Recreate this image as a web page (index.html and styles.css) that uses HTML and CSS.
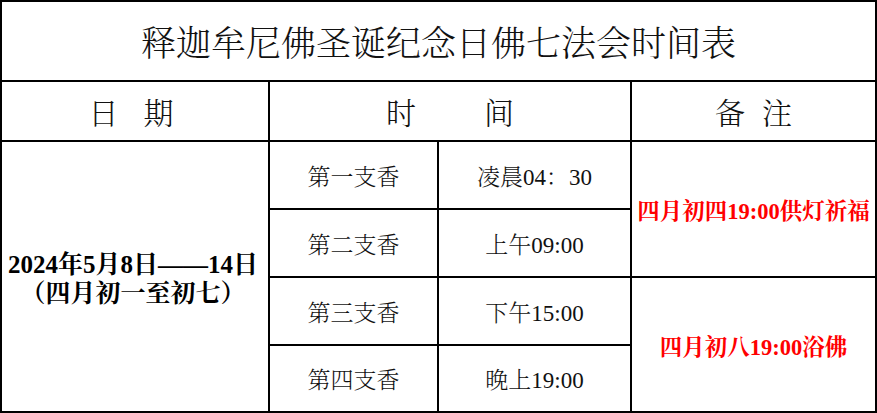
FILE: index.html
```html
<!DOCTYPE html>
<html lang="zh-CN">
<head>
<meta charset="utf-8">
<link rel="stylesheet" href="styles.css">
<title>释迦牟尼佛圣诞纪念日佛七法会时间表</title>
</head>
<body>
<div class="sheet">
  <div class="cell title">释迦牟尼佛圣诞纪念日佛七法会时间表</div>

  <div class="cell head head-date"><span>日</span><span class="gap-date">期</span></div>
  <div class="cell head head-time"><span>时</span><span class="gap-time">间</span></div>
  <div class="cell head head-note"><span>备</span><span class="gap-note">注</span></div>

  <div class="cell date">2024年5月8日——14日<br>（四月初一至初七）</div>

  <div class="cell body r1 c2">第一支香</div>
  <div class="cell body r1 c3">凌晨04：30</div>
  <div class="cell note n1">四月初四19:00供灯祈福</div>

  <div class="cell body r2 c2">第二支香</div>
  <div class="cell body r2 c3">上午09:00</div>

  <div class="cell body r3 c2">第三支香</div>
  <div class="cell body r3 c3">下午15:00</div>
  <div class="cell note n2">四月初八19:00浴佛</div>

  <div class="cell body r4 c2">第四支香</div>
  <div class="cell body r4 c3">晚上19:00</div>
</div>
</body>
</html>
```

FILE: styles.css
```css
html, body {
  margin: 0;
  padding: 0;
  background: #fff;
}

.sheet {
  width: 877px;
  height: 413px;
  box-sizing: border-box;
  display: grid;
  grid-template-columns: 266px 167px 191px 243px;
  grid-template-rows: 78px 58px 66px 66px 66px 65px;
  gap: 2px;
  padding: 2px;
  background: #000;
  font-family: "Liberation Serif", "Noto Serif CJK SC", "Noto Sans CJK SC", serif;
  color: #111;
}

.cell {
  background: #fff;
  display: flex;
  align-items: center;
  justify-content: center;
  text-align: center;
  white-space: nowrap;
}

.title {
  grid-column: 1 / 5;
  grid-row: 1;
  font-size: 35px;
  font-weight: 300;
}

.head {
  grid-row: 2;
  font-size: 30px;
  font-weight: 300;
}
.head-date { grid-column: 1; padding-right: 8px; }
.head-time { grid-column: 2 / 4; }
.head-note { grid-column: 4; }
.gap-date { margin-left: 25px; }
.gap-time { margin-left: 68px; }
.gap-note { margin-left: 17px; }

.date {
  grid-column: 1;
  grid-row: 3 / 7;
  font-size: 25px;
  font-weight: bold;
  line-height: 29px;
  color: #000;
  padding-top: 4px;
  padding-right: 4px;
}

.body {
  font-size: 23px;
  font-weight: 300;
}
.c2 { grid-column: 2; }
.c3 { grid-column: 3; }
.r1 { grid-row: 3; }
.r2 { grid-row: 4; }
.r3 { grid-row: 5; }
.r4 { grid-row: 6; }

.note {
  grid-column: 4;
  color: #ff0000;
  font-size: 22.5px;
  font-weight: bold;
}
.n1 { grid-row: 3 / 5; }
.n2 { grid-row: 5 / 7; }
```
